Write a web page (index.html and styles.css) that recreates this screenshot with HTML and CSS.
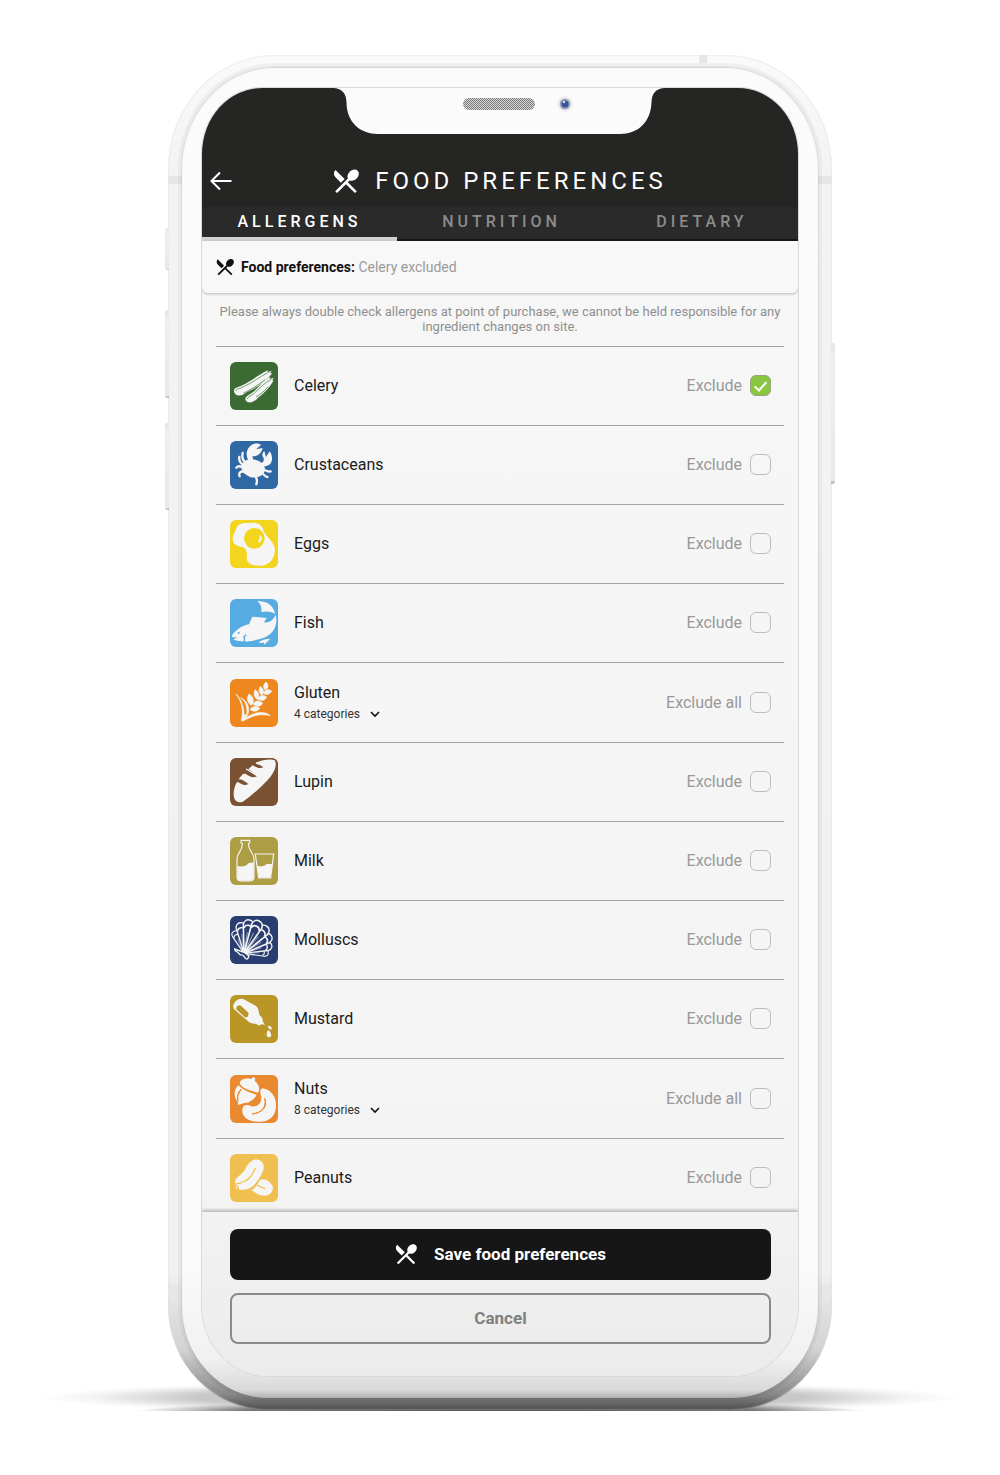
FILE: index.html
```html
<!DOCTYPE html>
<html lang="en">
    <head>
        <meta charset="UTF-8">
        <meta name="viewport" content="width=device-width, initial-scale=1.0">
        <title>Food preferences</title>
        <link rel="stylesheet" href="styles.css">
    </head>
    <body>
        <!-- shared icons -->
        <svg class="defs" aria-hidden="true">
            <symbol id="cutlery" viewBox="2 2 20 20">
                <path fill="currentColor" d="M8.1 13.34l2.83-2.83L3.91 3.5c-1.56 1.56-1.56 4.09 0 5.66l4.19 4.18zm6.78-1.81c1.53.71 3.68.21 5.27-1.38 1.91-1.91 2.28-4.65.81-6.12-1.46-1.46-4.2-1.1-6.12.81-1.59 1.59-2.09 3.74-1.38 5.27L3.7 19.87l1.41 1.41L12 14.41l6.88 6.88 1.41-1.41L13.41 13l1.47-1.47z"/>
            </symbol>
            <symbol id="chevron" viewBox="0 0 10 10">
                <path d="M1 3l4 4 4-4" fill="none" stroke="currentColor" stroke-width="1.6"/>
            </symbol>
        </svg>

        <div class="stage">
            <div class="shadow"></div>
            <div class="phone">
                <span class="key key-mute"></span>
                <span class="key key-up"></span>
                <span class="key key-down"></span>
                <span class="key key-power"></span>
                <span class="band band-top"></span>
                <span class="band band-upper"></span>
                <span class="band band-lower"></span>
                <div class="bezel">
                    <div class="screen">
                        <svg class="notch" viewBox="0 0 330 47" aria-hidden="true">
                            <defs>
                                <pattern id="mesh" width="2" height="2" patternUnits="userSpaceOnUse">
                                    <rect width="2" height="2" fill="#d8d8d8"/>
                                    <rect width="1" height="1" fill="#777"/>
                                    <rect x="1" y="1" width="1" height="1" fill="#777"/>
                                </pattern>
                            </defs>
                            <path fill="#fbfbfb" d="M0 0C9 1 12 6 12.500 14C12.500 34 26 46 44 46H286C304 46 317 34 317.500 14C318 6 321 1 330 0Z"/>
                            <rect x="129" y="10" width="72" height="12" rx="6" fill="url(#mesh)"/>
                            <circle cx="231" cy="16" r="8" fill="#f0f0f0"/>
                            <circle cx="231" cy="16" r="5.500" fill="#9ba3b5"/>
                            <circle cx="231" cy="16" r="3.500" fill="#34569b"/>
                            <circle cx="230" cy="14" r="1.300" fill="#c5d3ee"/>
                        </svg>

                        <header class="header">
                            <button class="back" type="button" aria-label="Back">
                                <svg viewBox="0 0 22 20"><path d="M21.500 10H1.500M10 1.500L1.500 10L10 18.500" fill="none" stroke="currentColor" stroke-width="2"/></svg>
                            </button>
                            <h1 class="heading"><svg><use href="#cutlery"/></svg>FOOD PREFERENCES</h1>
                        </header>
                        <nav class="tabs">
                            <button class="tab active" type="button">ALLERGENS</button>
                            <button class="tab" type="button">NUTRITION</button>
                            <button class="tab" type="button">DIETARY</button>
                        </nav>

                        <div class="summary">
                            <svg><use href="#cutlery"/></svg>
                            <p><strong>Food preferences:</strong> Celery excluded</p>
                        </div>

                        <main class="content">
                            <p class="notice">Please always double check allergens at point of purchase, we cannot be held responsible for any ingredient changes on site.</p>

                            <ul class="list">
                                <li class="row">
                                    <svg class="icon" viewBox="0 0 144 144">
                                        <rect width="144" height="144" rx="18" fill="#3b6b33"/>
                                        <path fill="#f5f5f5" d="M12 88C10 77 23 76 34 71C66 57 85 38 114 25L112 31L125 26L120 34L127 34C105 62 78 78 50 91C36 103 15 106 12 88Z"/>
                                        <path fill="#f5f5f5" d="M46 111C47 102 58 99 68 91C87 76 99 56 121 45L120 51L131 47L127 54L130 57C118 76 104 94 84 107C73 123 48 127 46 111Z"/>
                                        <g fill="none" stroke="#3b6b33" stroke-width="2">
                                            <path d="M17 87C19 79 30 80 39 75C70 61 89 44 116 31M40 94C62 82 85 70 106 52"/>
                                            <path d="M51 111C53 104 62 102 71 95C89 80 103 62 124 52M78 105C94 95 106 85 114 74"/>
                                        </g>
                                    </svg>
                                    <div class="name">Celery</div>
                                    <label class="exclude">Exclude <input type="checkbox" checked></label>
                                </li>
                                <li class="row">
                                    <svg class="icon" viewBox="0 0 144 144">
                                        <rect width="144" height="144" rx="18" fill="#3067a5"/>
                                        <path fill="#f5f5f5" d="M38 68C46 52 72 51 88 61C103 70 110 84 101 97C92 111 65 115 48 101C35 92 31 79 38 68Z"/>
                                        <path fill="#f5f5f5" d="M57 62C47 46 48 29 58 18C67 8 82 4 93 12L78 25L98 21C95 36 82 47 67 46L71 63Z"/>
                                        <path fill="#f5f5f5" d="M88 67C99 66 103 60 101 51C95 44 96 36 103 30L108 48L119 31C128 43 129 60 120 70C111 77 102 76 92 78Z"/>
                                        <g fill="none" stroke="#f5f5f5" stroke-width="7" stroke-linecap="round" stroke-linejoin="round">
                                            <path d="M50 67C40 61 35 49 38 36M45 73C31 68 26 59 28 48M43 82C32 74 24 74 19 80M44 93C32 88 25 96 29 106M98 86C109 87 113 94 122 91M95 94C102 100 102 106 112 108M76 104C80 112 84 119 79 130"/>
                                        </g>
                                    </svg>
                                    <div class="name">Crustaceans</div>
                                    <label class="exclude">Exclude <input type="checkbox"></label>
                                </li>
                                <li class="row">
                                    <svg class="icon" viewBox="0 0 144 144">
                                        <rect width="144" height="144" rx="18" fill="#f2d51c"/>
                                        <path fill="#f5f5f5" d="M18 27C24 10 43 8 56 10C70 6 92 8 98 25C103 48 128 59 134 83C138 112 119 137 91 137C66 138 49 130 50 112C52 99 49 87 40 82C22 79 9 75 8 58C8 44 14 39 18 27Z"/>
                                        <circle cx="73" cy="55" r="31" fill="#f2d51c"/>
                                        <path fill="#f5f5f5" d="M91 46C98 51 97 63 88 68C84 67 84 62 87 58C91 54 88 48 91 46Z"/>
                                    </svg>
                                    <div class="name">Eggs</div>
                                    <label class="exclude">Exclude <input type="checkbox"></label>
                                </li>
                                <li class="row">
                                    <svg class="icon" viewBox="0 0 144 144">
                                        <rect width="144" height="144" rx="18" fill="#56abe0"/>
                                        <path fill="#f5f5f5" d="M82 6C103 5 129 14 136 45C123 37 107 36 94 39C96 25 92 14 82 6Z"/>
                                        <path fill="#f5f5f5" d="M5 111C18 91 37 80 57 76L67 53L110 57L102 70C119 72 130 63 137 47C145 79 130 104 105 115C76 127 33 133 9 121L22 116L6 114Z"/>
                                        <path fill="#f5f5f5" d="M88 128C98 122 108 119 121 119L103 137L102 131L88 132Z"/>
                                        <path fill="none" stroke="#56abe0" stroke-width="4" d="M49 107L42 113C45 120 44 127 40 134"/>
                                        <circle cx="26" cy="102" r="3" fill="#56abe0"/>
                                    </svg>
                                    <div class="name">Fish</div>
                                    <label class="exclude">Exclude <input type="checkbox"></label>
                                </li>
                                <li class="row">
                                    <svg class="icon" viewBox="0 0 144 144">
                                        <rect width="144" height="144" rx="18" fill="#ed871e"/>
                                        <g fill="#f5f5f5" stroke="#f5f5f5" stroke-width="2">
                                            <path d="M108 9C98 17 100 29 106 33C115 28 117 17 108 9Z"/>
                                            <path d="M91 22C84 33 88 45 96 48C103 41 101 29 91 22Z"/>
                                            <path d="M125 36C115 28 104 33 100 42C108 49 119 48 125 36Z"/>
                                            <path d="M75 32C69 45 74 58 83 62C90 52 87 39 75 32Z"/>
                                            <path d="M110 54C98 45 88 51 84 60C93 67 105 66 110 54Z"/>
                                            <path d="M57 45C48 58 53 73 64 79C74 69 71 53 57 45Z"/>
                                            <path d="M98 73C86 61 73 67 69 75C79 84 91 84 98 73Z"/>
                                            <path d="M89 88C76 78 64 83 61 92C71 99 83 98 89 88Z"/>
                                            <path d="M18 45C36 64 42 87 43 112L51 103C52 83 47 67 32 56C51 65 60 84 54 105L48 116C77 97 104 96 121 110C92 103 68 109 38 127L34 124C42 88 33 65 18 45Z"/>
                                        </g>
                                    </svg>
                                    <div class="name">
                                        Gluten
                                        <button class="more" type="button">4 categories <svg><use href="#chevron"/></svg></button>
                                    </div>
                                    <label class="exclude">Exclude all <input type="checkbox"></label>
                                </li>
                                <li class="row">
                                    <svg class="icon" viewBox="0 0 144 144">
                                        <rect width="144" height="144" rx="18" fill="#7b5134"/>
                                        <path fill="#f5f5f5" d="M75 16C92 6 121 1 134 7C143 20 133 46 111 68C86 94 59 118 37 132C20 136 10 125 11 105C13 81 24 62 44 43Z"/>
                                        <g fill="#7b5134">
                                            <path d="M73 15C82 11 94 20 101 27C91 35 77 27 66 20L62 18Z"/>
                                            <path d="M47 31C55 31 63 39 81 55C69 62 54 53 47 47L38 48Z"/>
                                            <path d="M24 64C32 62 42 67 55 78C43 85 33 77 24 72L17 75Z"/>
                                        </g>
                                        <path fill="none" stroke="#f5f5f5" stroke-width="4" d="M78 15C91 18 96 22 103 27M48 33C61 39 70 47 80 52"/>
                                    </svg>
                                    <div class="name">Lupin</div>
                                    <label class="exclude">Exclude <input type="checkbox"></label>
                                </li>
                                <li class="row">
                                    <svg class="icon" viewBox="0 0 144 144">
                                        <rect width="144" height="144" rx="18" fill="#ad9d44"/>
                                        <path fill="none" stroke="#f5f5f5" stroke-width="3.500" d="M33 10H59V17L55 20C55 42 72 47 72 65V120C72 128 67 132 58 132H34C25 132 21 128 21 120V65C21 47 38 42 37 20L33 17ZM76 51H131L122 123H86Z"/>
                                        <path fill="#f5f5f5" d="M22 88C38 88 45 90 53 81C58 76 64 79 71 76V121C71 127 65 131 58 131H34C27 131 22 127 22 121ZM81 86C96 89 103 88 109 82C114 77 119 83 127 80L121 122H87Z"/>
                                    </svg>
                                    <div class="name">Milk</div>
                                    <label class="exclude">Exclude <input type="checkbox"></label>
                                </li>
                                <li class="row">
                                    <svg class="icon" viewBox="0 0 144 144">
                                        <rect width="144" height="144" rx="18" fill="#293d70"/>
                                        <defs>
                                            <g id="rib" fill="#293d70" stroke="#f5f5f5" stroke-width="4.500" stroke-linejoin="round">
                                                <path d="M0 0L-15 -82C-15 -104 15 -104 15 -82Z"/>
                                                <path d="M-12 -72C-9 -86 9 -86 12 -72"/>
                                                <path d="M0 0L0 -62" stroke-width="1.500"/>
                                            </g>
                                        </defs>
                                        <!-- ribs fan out from the hinge -->
                                        <use href="#rib" transform="translate(42 112) rotate(88) scale(.74)"/>
                                        <use href="#rib" transform="translate(42 112) rotate(-24) scale(.74)"/>
                                        <use href="#rib" transform="translate(42 112) rotate(73) scale(.88)"/>
                                        <use href="#rib" transform="translate(42 112) rotate(-7) scale(.94)"/>
                                        <use href="#rib" transform="translate(42 112) rotate(57) scale(.99)"/>
                                        <use href="#rib" transform="translate(42 112) rotate(9) scale(1.030)"/>
                                        <use href="#rib" transform="translate(42 112) rotate(41) scale(1.080)"/>
                                        <use href="#rib" transform="translate(42 112) rotate(25) scale(1.090)"/>
                                        <path d="M14 99C13 109 24 105 26 112C30 121 36 112 42 121C49 134 54 130 57 120L44 110Z" fill="#293d70" stroke="#f5f5f5" stroke-width="4"/>
                                    </svg>
                                    <div class="name">Molluscs</div>
                                    <label class="exclude">Exclude <input type="checkbox"></label>
                                </li>
                                <li class="row">
                                    <svg class="icon" viewBox="0 0 144 144">
                                        <rect width="144" height="144" rx="18" fill="#b99625"/>
                                        <path fill="#f5f5f5" d="M10 31C14 18 27 9 40 12L78 33C86 39 86 48 88 59L97 69L99 81L105 89L94 88C90 93 83 92 79 86C67 87 57 84 51 76L14 44C10 40 9 36 10 31Z"/>
                                        <path fill="#b99625" d="M21 33L31 31L56 54L53 66L45 67L18 42Z"/>
                                        <path fill="#f5f5f5" d="M113 94L119 92L125 98L125 104L117 101ZM115 104C124 113 127 123 119 127C109 127 107 117 115 104Z"/>
                                    </svg>
                                    <div class="name">Mustard</div>
                                    <label class="exclude">Exclude <input type="checkbox"></label>
                                </li>
                                <li class="row">
                                    <svg class="icon" viewBox="0 0 144 144">
                                        <rect width="144" height="144" rx="18" fill="#e98a30"/>
                                        <g fill="#f5f5f5">
                                            <path d="M29 25C31 12 47 8 64 12L69 6L76 9L74 17C88 28 91 43 84 53C66 49 36 42 29 25Z"/>
                                            <path d="M25 31C39 45 61 54 80 59C75 72 58 85 43 84L25 90L23 80C10 66 11 42 25 31Z"/>
                                            <path d="M97 40C122 43 139 66 138 91C139 124 116 143 82 140C53 139 35 124 37 104C38 89 53 87 62 93C80 100 100 83 92 59C89 50 91 43 97 40Z"/>
                                        </g>
                                        <path d="M34 43C24 53 21 67 24 80" fill="none" stroke="#e98a30" stroke-width="4"/>
                                        <path d="M104 70C114 96 98 112 67 117C94 114 110 98 104 70Z" fill="#e98a30" stroke="#e98a30" stroke-width="3"/>
                                    </svg>
                                    <div class="name">
                                        Nuts
                                        <button class="more" type="button">8 categories <svg><use href="#chevron"/></svg></button>
                                    </div>
                                    <label class="exclude">Exclude all <input type="checkbox"></label>
                                </li>
                                <li class="row">
                                    <svg class="icon" viewBox="0 0 144 144">
                                        <rect width="144" height="144" rx="18" fill="#efc050"/>
                                        <path fill="#f5f5f5" d="M90 78C105 71 124 84 129 101C128 120 111 128 94 124C80 122 74 112 63 109C75 104 82 92 90 78Z"/>
                                        <path fill="#f5f5f5" d="M15 88C15 69 33 65 44 49C53 29 66 15 83 17C99 20 105 34 99 51C93 67 85 77 77 88C66 103 51 109 36 107C20 107 14 100 15 88Z"/>
                                        <path fill="none" stroke="#efc050" stroke-width="4" stroke-linecap="round" d="M75 44C68 62 57 75 43 83M84 95L104 104M25 106C26 97 22 96 15 94M17 90C27 86 35 91 37 83"/>
                                    </svg>
                                    <div class="name">Peanuts</div>
                                    <label class="exclude">Exclude <input type="checkbox"></label>
                                </li>
                            </ul>
                        </main>

                        <footer class="footer">
                            <button class="btn btn-save" type="button"><svg><use href="#cutlery"/></svg>Save food preferences</button>
                            <button class="btn btn-cancel" type="button">Cancel</button>
                        </footer>
                    </div>
                </div>
            </div>
        </div>
    </body>
</html>
```
FILE: styles.css
```css
* {
    margin: 0;
    padding: 0;
    box-sizing: border-box;
}

body {
    background-color: #fff;
    font-family: Roboto, "Liberation Sans", sans-serif;
    color: #1b1b1b;
}

button {
    font: inherit;
    color: inherit;
    background: none;
    border: none;
    cursor: pointer;
}

svg {
    display: block;
    flex: none;
}

.defs {
    position: absolute;
    width: 0;
    height: 0;
}

.stage {
    position: relative;
    max-width: 960px;
    margin: 0 auto;
    padding: 55px 20px 64px;
}

/* shadow on the floor */
.shadow {
    position: absolute;
    left: 0;
    right: 0;
    bottom: 63px;
    height: 34px;
    background:
        radial-gradient(ellipse 38% 10px at 50% 100%, #555 0%, #777 70%, rgba(140, 140, 140, 0.5) 86%, rgba(170, 170, 170, 0) 100%),
        radial-gradient(ellipse 48% 17px at 50% 60%, #bbb 0%, #c8c8c8 66%, #e0e0e0 78%, #f6f6f6 90%, rgba(255, 255, 255, 0) 100%);
}

/* handset */
.phone {
    position: relative;
    max-width: 664px;
    margin: 0 auto;
    padding: 12px 14px;
    border-radius: 106px 106px 100px 100px / 114px 114px 104px 104px;
    background: linear-gradient(to bottom, #fafafa 0, #f3f3f3 120px, #f1f1f1 calc(100% - 140px), #d2d2d2 calc(100% - 60px), #8a8a8a calc(100% - 16px), #4c4c4c 100%);
    box-shadow: inset 0 0 2px #d8d8d8;
}

.bezel {
    position: relative;
    padding: 21px 20px 22px;
    border-radius: 92px 92px 86px 86px / 102px 102px 92px 92px;
    background: linear-gradient(to bottom, #fbfbfb 0, #fbfbfb calc(100% - 140px), #f1f1f1 calc(100% - 40px), #d9d9d9 calc(100% - 8px), #b0b0b0 100%);
    box-shadow: 0 0 0 1px rgba(0, 0, 0, 0.06), 0 0 0 4px rgba(0, 0, 0, 0.04), inset 0 1px 1px #d8d8d8;
}

.screen {
    position: relative;
    overflow: hidden;
    border-radius: 60px 60px 66px 66px / 66px 66px 70px 70px;
    background: linear-gradient(to bottom, #f7f7f7 0, #f4f4f4 85%, #ebebeb 100%);
    box-shadow: 0 0 0 1px #d9d9d9;
}

.notch {
    position: absolute;
    top: 0;
    left: 50%;
    width: 330px;
    margin-left: -166px;
}

.key {
    position: absolute;
    left: -3px;
    width: 4px;
    border-radius: 3px 0 0 3px;
    background: linear-gradient(to bottom, #e4e4e4, #efefef 10%, #e9e9e9 97%, #aaa);
}

.key-mute {
    top: 173px;
    height: 42px;
}

.key-up {
    top: 255px;
    height: 88px;
}

.key-down {
    top: 368px;
    height: 87px;
}

.key-power {
    top: 288px;
    left: auto;
    right: -3px;
    height: 141px;
    border-radius: 0 3px 3px 0;
}

/* antenna bands */
.band {
    position: absolute;
    left: 0;
    right: 0;
    height: 8px;
    background-color: #e6e6e6;
}

.band-top {
    left: 80%;
    right: auto;
    width: 8px;
    top: 0;
}

.band-upper {
    top: 121px;
}

.band-lower {
    bottom: 117px;
}

/* top bar */
.header {
    display: grid;
    grid-template-columns: 40px 1fr 40px;
    align-items: center;
    padding-top: 67px;
    height: 119px;
    background-color: #252524;
    color: #fff;
}

.back {
    padding: 8px;
}

.back svg {
    width: 22px;
    height: 20px;
}

.heading {
    display: flex;
    align-items: center;
    justify-content: center;
    gap: 16px;
    font-size: 24px;
    font-weight: 400;
    letter-spacing: 4px;
    white-space: nowrap;
}

.heading svg {
    width: 26px;
    height: 26px;
}

.tabs {
    display: grid;
    grid-template-columns: 195fr 209fr 192fr;
    height: 34px;
    background-color: #2a2a2a;
}

.tab {
    padding-bottom: 4px;
    border-bottom: 2px solid #1b1518;
    font-size: 16px;
    font-weight: 500;
    letter-spacing: 4px;
    color: #8c8c8c;
}

.tab.active {
    padding-bottom: 2px;
    border-bottom: 4px solid #d2d0d2;
    color: #fff;
}

.summary {
    position: relative;
    display: flex;
    align-items: center;
    gap: 7px;
    height: 52px;
    padding: 0 14px;
    border-radius: 0 0 6px 6px;
    background-color: #f8f8f8;
    box-shadow: 0 1px 3px rgba(0, 0, 0, 0.25);
    font-size: 14px;
    color: #9a9a9a;
}

.summary svg {
    width: 18px;
    height: 18px;
    color: #111;
}

.summary strong {
    font-weight: 700;
    color: #111;
}

.content {
    padding: 0 14px;
}

.notice {
    padding: 11px 0 12px;
    font-size: 13px;
    line-height: 15px;
    text-align: center;
    color: #8f8f8f;
}

/* allergens */
.list {
    list-style: none;
}

.row {
    display: flex;
    align-items: center;
    gap: 16px;
    min-height: 79px;
    padding: 15px 13px 15px 14px;
    border-top: 1px solid #a3a3a3;
}

.row:has(.more) {
    min-height: 80px;
}

.row:last-child {
    min-height: 0;
    padding-bottom: 9px;
}

.icon {
    width: 48px;
    height: 48px;
}

.name {
    flex: 1;
    font-size: 16px;
    line-height: 20px;
}

.more {
    display: flex;
    align-items: center;
    gap: 10px;
    padding-top: 3px;
    font-size: 12px;
    line-height: 16px;
    color: #333;
}

.more svg {
    width: 10px;
    height: 10px;
    color: #111;
}

.exclude {
    display: flex;
    align-items: center;
    gap: 8px;
    padding-bottom: 1px;
    font-size: 16px;
    color: #999;
}

.exclude input {
    appearance: none;
    display: flex;
    justify-content: center;
    width: 21px;
    height: 21px;
    border: 1px solid #bdbdbd;
    border-radius: 6px;
    cursor: pointer;
}

.exclude input:checked {
    border: 1px solid #94a583;
    background-color: #8ac640;
}

.exclude input:checked::before {
    content: "";
    width: 5px;
    height: 10px;
    margin-top: 3px;
    border: solid #fff;
    border-width: 0 2px 2px 0;
    transform: rotate(42deg);
}

/* actions */
.footer {
    position: relative;
    display: flex;
    flex-direction: column;
    gap: 13px;
    padding: 17px 27px 32px 28px;
    border-top: 1px solid #c4c4c4;
    box-shadow: 0 -1px 3px rgba(0, 0, 0, 0.25);
}

.btn {
    display: flex;
    align-items: center;
    justify-content: center;
    gap: 17px;
    height: 51px;
    padding-bottom: 2px;
    border-radius: 8px;
    font-size: 17px;
    font-weight: 700;
}

.btn svg {
    width: 22px;
    height: 22px;
}

.btn-save {
    background-color: #161616;
    color: #fff;
}

.btn-cancel {
    border: 2px solid #8a8a8a;
    color: #808080;
}
```
